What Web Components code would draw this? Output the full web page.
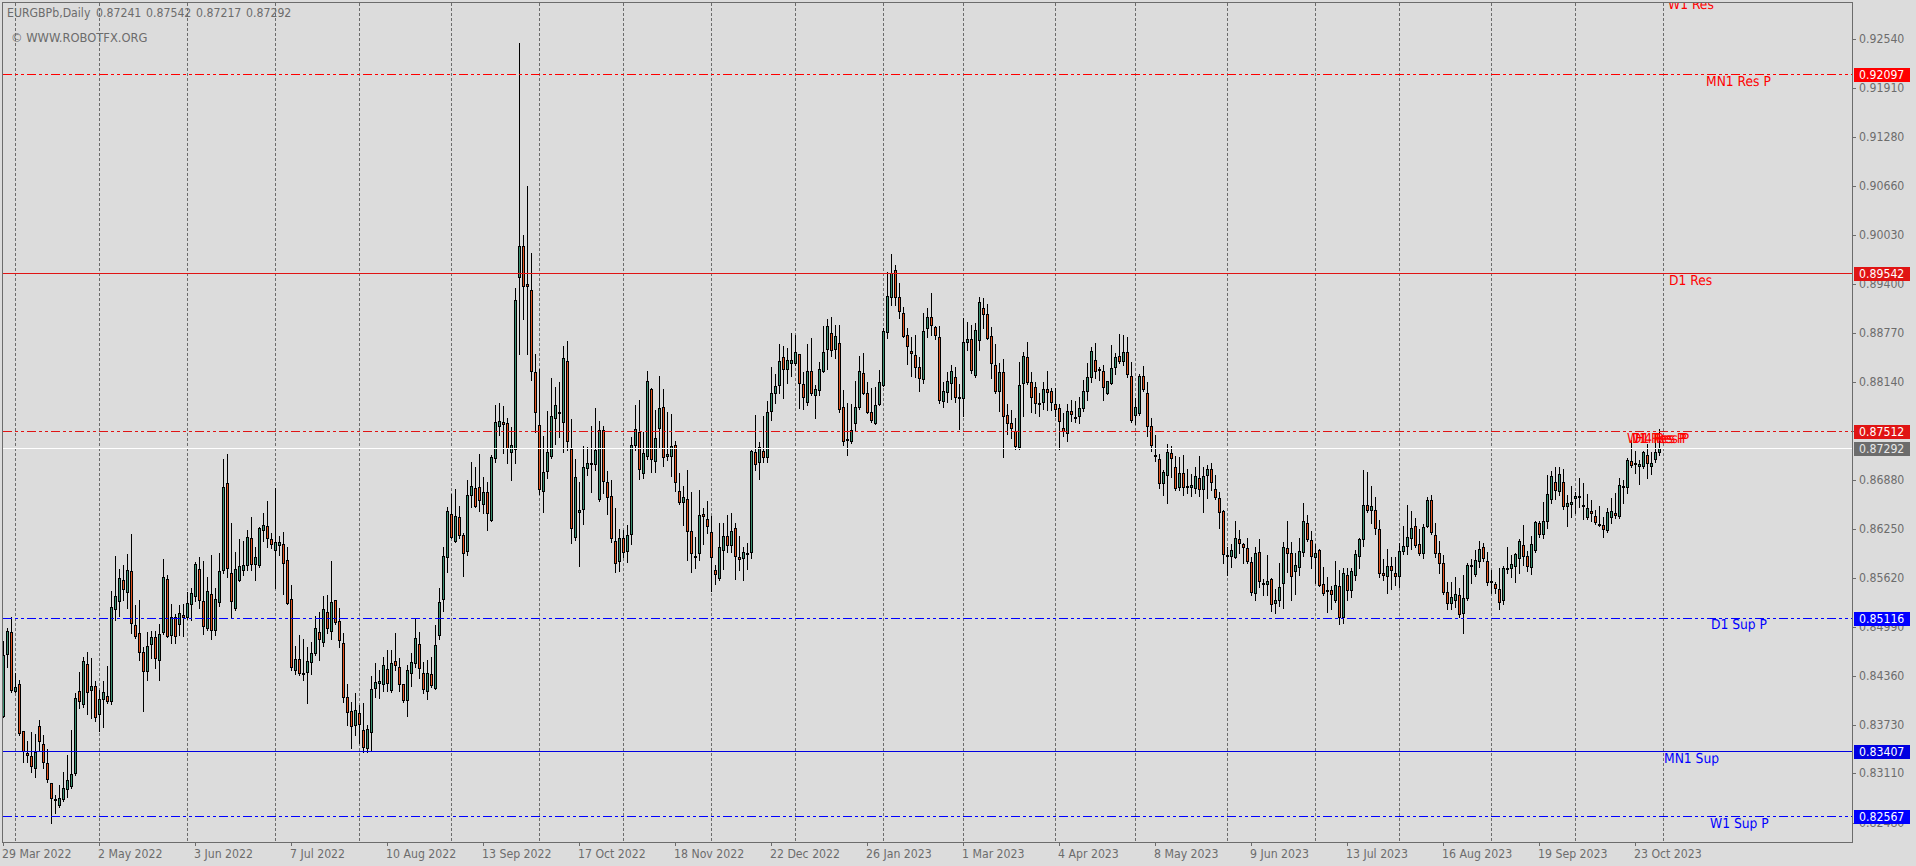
<!DOCTYPE html>
<html lang="en"><head><meta charset="utf-8"><title>EURGBPb,Daily</title>
<style>
html,body{margin:0;padding:0;background:#dcdcdc;overflow:hidden;height:866px}
</style></head><body>
<chart-window>
  <candle-plot slot="plot">
    <chart-legend>
      <span slot="symbol">EURGBPb,Daily</span>
      <span slot="open">0.87241</span><span slot="high">0.87542</span><span slot="low">0.87217</span><span slot="close">0.87292</span>
      <span slot="note">© WWW.ROBOTFX.ORG</span>
    </chart-legend>
  </candle-plot>
  <price-axis slot="axis"></price-axis>
  <time-axis slot="time"></time-axis>
</chart-window>
<script>
const FONT='"DejaVu Sans Condensed","DejaVu Sans",sans-serif';
const TEXT='#6c6c6c';
const SEGS=[
[600,"g122 165 350 350,g85 93 165 200,r52 97 272 275,g220 262 275 275,r240 253 402 405,r394 394 455 487,r423 460 467 487,r396 469 500 515,g402 455 508 530,r360 379 425 450,r405 433 488 503,r447 490 540 545,r548 550 598 668,r585 598 601 638,g555 595 617 622,g515 565 601 603,g465 541 571 590,g390 523 561 563,g280 295 521 525,r215 274 307 325,g170 184 314 320,r157 193 280 342,g175 259 272 355,r243 259 353 363,g270 298 346 392,g243 277 301 380,r198 289 307 310"],
[440,"g453 500 785 792,g348 468 509 540,g388 415 485 528,r375 421 451 480,g342 391 458 505,r282 393 553 578,r495 556 590 593,r480 580 640 660,r620 637 697 812,g575 618 695 720,g573 592 615 655,r573 592 656 685,g552 583 662 720,g357 412 578 582,r405 418 590 592,g492 532 588 610,r522 530 590 608,g495 520 554 585,r492 526 533 588,g455 490 535 538,g445 460 495 540,g365 373 470 483,r352 388 482 503,r363 484 560 582,g410 454 566 570,r346 463 572 597,g445 478 572 585,g340 394 488 498,g57 142 394 398,r42 130 386 410,r250 400 485 535,g336 388 507 510,g297 379 422 424,g303 376 392 405,g270 292 377 390,r232 295 374 390,g322 352 375 420,g262 265 378 382,g220 256 272 302,r183 259 296 322,r280 298 314 325,g145 307 332 444,g288 307 318 345,r275 313 371 462,r322 361 491 493,r436 478 683 690,g618 658 692 702,r585 658 701 706,g598 698 701 720,g620 663 700 788,g607 640 668 702,g528 565 642 645,r515 577 600 660"],
[450,"g438 478 580 587,r435 487 538 550,g333 457 547 567,r450 451 520 522,r475 514 574 590,r550 578 745 755,r702 742 790 825,r755 784 832 893,g730 781 829 855,r765 790 826 880,r760 841 895 905,g825 838 898 905,g678 718 850 900,g640 697 718 740,g660 694 703 743,g622 646 706 722,r600 658 703 722,g600 640 724 725,r548 634 647 660,r625 652 704 722,r702 703 752 755,g645 661 752 797,g610 637 673 708,g505 565 641 650,r547 583 656 685,r637 670 719 728,g630 670 725 747,r622 673 708 712,g525 586 716 716,g415 457 557 567,g290 319 449 483,g172 184 325 365,r133 193 263 265,g118 199 275 275,r168 202 258 263,r248 256 311 378,g90 136 305 315,g37 109 137 170,r50 115 170 172,r13 112 152 182,g80 127 164 190,r95 127 191 240"],
[230,"g675 682 872 872,g525 577 686 695,g519 574 590 614,r527 577 584 668,r565 580 656 698,g590 646 668 750,g175 211 659 698,g-561 49 143 372,r15 49 170 267,r-132 163 170 372,r70 181 427 450,r373 427 548 605,r417 586 781 792,g618 727 785 846,g543 667 727 745,g445 559 680 683,g472 526 566 642,g457 547 548 620,g349 385 578 665,r333 394 635 660,r568 658 898 938,g688 742 923 930,g755 841 848 1007,g648 712 839 882,g652 700 718 735,g588 700 703 785,g534 661 706 720,g574 601 809 812,r587 601 757 790,r723 757 805 852,r750 799 928 937,r835 934 1003 1025,g897 925 997 1022,r900 925 970 980,g885 916 967 995,g620 646 916 941,g525 598 647 660,r510 607 721 747,g605 670 733 745,g423 454 680 688,r475 478 691 725,g540 625 695 725,g438 535 596 655,r477 532 683 708,g545 673 680 690,g552 649 680 738,r633 646 760 783,r730 784 820 822,g768 802 820 885,r720 808 905 990,r785 904 973 1025,g920 977 983 1014,g780 856 973 990,r835 853 860 942,r812 868 890 910,r858 907 985 1083,r1005 1021 1036 1062,g880 952 1048 1050,g880 919 964 1017,r855 919 947 965,g850 904 947 965,r880 895 982 1047,r918 982 989 1020,g950 967 986 1050,g940 970 971 1017,g660 664 970 984,r555 667 706 720,g636 652 700 747,r558 664 685 697,g514 547 685 696,g410 490 545 570,g432 469 491 520,g342 394 469 490"],
[250,"r288 322 360 445,g295 331 360 398,g250 331 341 378,g255 307 341 344,r312 313 401 473,r365 403 443 476,g282 364 458 465,r265 364 431 436,g405 418 437 503,g335 358 422 436,g228 307 365 367,g207 229 299 357,r200 250 304 318,g225 259 300 323,r225 280 480 485,r420 472 575 585,r460 568 572 614,g462 541 575 578,g393 472 521 540,g318 364 475 478,r310 370 431 433,r395 430 488 490,r415 487 512 515,g410 466 521 521,g360 397 464 466,g235 244 407 408,g66 139 248 263,g12 70 145 165,r45 61 143 165,r98 142 187 205,r170 190 260 262,r235 256 290 342,r262 304 311 378,r255 316 353 382,r320 352 386 423,g190 244 389 398,g175 202 238 260,r129 202 229 255,r228 232 259 268,r228 262 452 458,g395 424 455 470,g365 394 428 456,g345 364 401 448,r350 382 445 456,r403 441 442 537,g205 277 448 497,g215 268 278 300,r225 268 362 369,g220 241 379 380,g140 157 272 300,r145 175 194 235,r163 193 266 268,r230 259 341 383,r283 346 425 428,g340 367 425 483,r328 367 500 620,r462 496 521 553,r480 520 536 565,r503 544 590 598,g335 406 593 596,g305 319 403 497,r277 322 398 401,r365 397 443 487,r395 412 461 488,r430 460 466 497,g395 418 460 478,r364 418 428 480,r415 424 460 480,r415 461 481 497,r462 475 517 597,r490 533 546 558,g462 484 551 573,r450 484 496 513,g452 502 503 516,g440 475 502 518,g390 424 476 482,g338 382 425 450,g290 304 383 396,r280 331 365 385,g350 358 364 390,r345 364 415 450,g393 394 431 431"],
[330,"g45 115 163 163,g70 82 115 132,r13 79 95 100,g15 67 97 104,r22 67 134 140,r96 139 274 275,g205 232 259 283,g132 139 253 254,r108 139 181 182,r157 190 290 317,r265 289 349 362,r316 376 380 393,r373 388 463 473,g420 427 463 495,g342 367 439 518,r348 370 388 440,r378 412 476 480,g382 430 473 480,r375 430 473 495,r418 469 472 490,g432 466 473 497,g412 439 478 490,r378 445 481 497,g410 439 481 545,g405 418 439 503,r400 418 458 480,r435 478 503 507,r487 505 550 593,r540 544 676 698,r650 676 680 735,g642 661 680 710,g573 625 685 685,r600 628 643 670,r640 643 655 698,r625 655 697 698,r680 697 790 795,g650 670 793 810,r628 667 757 772,r748 760 766 795,g675 754 766 795,r745 748 826 843,g778 811 821 850,g698 772 814 828,g637 652 763 833,r573 655 673 725,r635 670 742 810,g670 706 727 792,g625 664 715 735,g520 574 670 678,r556 580 631 632,r603 631 680 713,g642 670 685 760,r658 661 767 768,r712 763 793 795,g740 781 787 845,r768 781 796 838,g693 766 812 815,r720 769 865 882,g715 730 865 878,r715 736 784 810,g715 724 784 800,g660 673 739 750,g625 628 682 714,g420 526 631 648,r427 526 544 546,g467 529 544 580,r500 541 596 612,r570 598 731 742,r687 730 737 750,g657 709 742 788,r680 709 724 777,r680 730 742 765,g640 664 742 772"],
[420,"g318 379 395 402,g255 352 380 402,g273 325 356 387,r295 319 377 382,r328 373 403 405,g312 322 403 413,g230 241 320 322,r225 241 338 343,r310 346 402 410,r363 400 431 460,r405 430 518 522,r487 517 553 566,g485 532 553 566,g472 523 544 560,r505 526 584 590,g465 535 581 638,g430 436 538 540,g418 435 437 490,g390 421 466 468,g363 388 427 442,r370 382 418 422,r395 424 490 495,r450 484 487 518,r485 493 508 520,r443 508 550 566,g438 445 544 553,g380 445 447 460,g405 433 448 470,g400 403 440 485,g357 364 418 460,r315 376 412 435,r392 409 442 452,g348 373 445 462,g303 307 392 397,r302 310 346 352,g247 304 346 353,g165 223 305 325,g152 169 241 248,r142 187 214 238,g140 163 215 225,r148 187 260 268,g225 250 260 318,g198 247 254 292,g217 229 236 280,r175 229 233 262,r190 254 257 296,g222 265 295 296,r240 274 281 303,r270 289 308 312,r258 313 316 318,r290 316 331 350,g263 277 332 335,g234 274 293 308,r220 280 288 295,g175 196 292 293,r180 199 203 248,g115 121 205 218,r60 124 138 142,r94 130 132 158,g120 133 140 193,g93 97 142 145,r72 106 133 173,g95 130 142 163,g40 97 119 125,g28 85 98 104"]
];
const LEVELS=[
 {y:74,color:'#ff0000',dash:true,price:'0.92097'},
 {y:273,color:'#e01414',dash:false,price:'0.89542'},
 {y:431,color:'#e01414',dash:true,price:'0.87512'},
 {y:448,color:'#ffffff',dash:false,price:'0.87292',bg:'#6c6c6c',fg:'#e8e8e8'},
 {y:618,color:'#0000ff',dash:true,price:'0.85116'},
 {y:751,color:'#0000e0',dash:false,price:'0.83407'},
 {y:816,color:'#0000ff',dash:true,price:'0.82567'}
];
const GRID=[15,99,187,275,359,451,539,623,711,795,883,963,1055,1135,1227,1315,1399,1491,1575,1663];
const LABELS=[
 ['W1 Res',1668,9,'#ff0000'],['MN1 Res P',1706,86,'#ff0000'],['D1 Res',1669,285,'#ff0000'],
 ['W1 Res P',1627,443,'#ff0000'],['D1 Res P',1632,443,'#ff0000'],['H4 Res P',1635,443,'#ff0000'],
 ['D1 Sup P',1711,629,'#0000ff'],['MN1 Sup',1664,763,'#0000ff'],['W1 Sup P',1710,828,'#0000ff']
];

class ChartWindow extends HTMLElement{
  constructor(){super();this.attachShadow({mode:'open'}).innerHTML=`<style>
    :host{display:grid;grid-template-columns:1851px 1fr;grid-template-rows:841px 1fr;width:1914px;height:864px;padding:2px 0 0 2px;background:#dcdcdc;color:${TEXT};font:12.2px/14px ${FONT}}
    .a{grid-column:2;grid-row:1/3}
    .t{grid-column:1;grid-row:2}
  </style><slot name="plot"></slot><div class="a"><slot name="axis"></slot></div><div class="t"><slot name="time"></slot></div>`;}
}
class CandlePlot extends HTMLElement{
  constructor(){super();
    let i=0,wicks='',green='',red='',black='';
    for(const [o,s] of SEGS){for(const c of s.split(',')){
      const col=c[0],[h,t,b,l]=c.slice(1).split(' ').map(v=>Math.round(o+v/3));
      const x=3+4*i;
      wicks+=`M${x} ${h}h1V${l+1}h-1z`;
      const hh=Math.max(b-t,2);
      black+=`M${x-1} ${t}h3v${hh}h-3z`;
      if(hh>2){const f=`M${x} ${t+1}h1v${hh-2}h-1z`;if(col==='g')green+=f;else red+=f;}
      i++;
    }}
    const grid=GRID.map(x=>`M${x+.5} 3V842`).join('');
    const lines=LEVELS.map(l=>`<path d="M3 ${l.y+.5}H1852" stroke="${l.color}" ${l.dash?'stroke-dasharray="9 3 3 3 3 3"':''}/>`).join('');
    const texts=LABELS.map(([s,x,y,c])=>`<text x="${x}" y="${y}" fill="${c}">${s}</text>`).join('');
    this.attachShadow({mode:'open'}).innerHTML=`<style>
      :host{display:block;position:relative;box-sizing:border-box;width:1851px;height:841px;border:1px solid #6c6c6c;overflow:hidden}
      svg{display:block;width:1849px;height:839px}
      .g{stroke:#6c6c6c;stroke-dasharray:3 2;fill:none}
      text{font:13.7px ${FONT}}
    </style><svg viewBox="3 3 1849 839" shape-rendering="crispEdges">
      <path class="g" d="${grid}"/>
      <path d="${wicks}${black}" fill="#000"/>
      <path d="${green}" fill="#3a9070"/>
      <path d="${red}" fill="#e2521c"/>
      <g fill="none">${lines}</g>
      <g text-rendering="geometricPrecision">${texts}</g>
    </svg><slot></slot>`;
  }
}
class ChartLegend extends HTMLElement{
  constructor(){super();this.attachShadow({mode:'open'}).innerHTML=`<style>
    :host{display:block;position:absolute;left:4px;top:3px;color:${TEXT};font:12.2px/14px ${FONT}}
    .r{display:flex;height:14px;white-space:nowrap}
    .s{width:89px}.v{width:50px;display:block}
    .n{margin:11px 0 0 4px;font-size:12.8px}
  </style><div class="r"><div class="s"><slot name="symbol"></slot></div>
    <div class="v"><slot name="open"></slot></div><div class="v"><slot name="high"></slot></div><div class="v"><slot name="low"></slot></div><div class="v"><slot name="close"></slot></div></div>
  <div class="n"><slot name="note"></slot></div>`;}
}
class PriceAxis extends HTMLElement{
  constructor(){super();
    const p=['0.92540','0.91910','0.91280','0.90660','0.90030','0.89400','0.88770','0.88140','0.87510','0.86880','0.86250','0.85620','0.84990','0.84360','0.83730','0.83110','0.82480'];
    const ys=[39,88,137,186,235,284,333,382,431,480,529,578,627,676,725,773,823];
    const rows=p.map((t,k)=>`<div class="row" style="height:${(ys[k+1]||ys[k]+20)-ys[k]}px"><i></i><span>${t}</span></div>`).join('');
    const tags=LEVELS.map(l=>`<price-tag style="top:${l.y-6}px;background:${l.bg||l.color};color:${l.fg||'#fff'}">${l.price}</price-tag>`).join('');
    this.attachShadow({mode:'open'}).innerHTML=`<style>
      :host{display:block;position:relative;margin-top:-2px;height:866px;overflow:hidden}
      .list{display:flex;flex-direction:column;padding-top:39px}
      .row{position:relative;flex:none;display:flex;align-items:flex-start}
      i{display:block;width:3px;height:1px;background:#6c6c6c;flex:none}
      span{display:block;margin:-7px 0 0 3px;height:14px}
    </style><div class="list">${rows}</div>${tags}`;
  }
}
class PriceTag extends HTMLElement{
  constructor(){super();this.attachShadow({mode:'open'}).innerHTML=`<style>
    :host{display:block;position:absolute;left:1px;width:56px;height:14px;box-sizing:border-box;padding-left:5px;font:12.2px/14px ${FONT}}
  </style><slot></slot>`;}
}
class TimeAxis extends HTMLElement{
  constructor(){super();
    const d=['29 Mar 2022','2 May 2022','3 Jun 2022','7 Jul 2022','10 Aug 2022','13 Sep 2022','17 Oct 2022','18 Nov 2022','22 Dec 2022','26 Jan 2023','1 Mar 2023','4 Apr 2023','8 May 2023','9 Jun 2023','13 Jul 2023','16 Aug 2023','19 Sep 2023','23 Oct 2023'];
    this.attachShadow({mode:'open'}).innerHTML=`<style>
      :host{display:grid;grid-template-columns:repeat(18,96px);padding-left:1px;height:23px}
      .c{position:relative;white-space:nowrap}
      i{display:block;width:1px;height:3px;background:#6c6c6c}
      span{display:block;margin:1px 0 0 -1px;height:14px}
    </style>`+d.map(t=>`<div class="c"><i></i><span>${t}</span></div>`).join('');
  }
}
customElements.define('chart-window',ChartWindow);
customElements.define('candle-plot',CandlePlot);
customElements.define('chart-legend',ChartLegend);
customElements.define('price-tag',PriceTag);
customElements.define('price-axis',PriceAxis);
customElements.define('time-axis',TimeAxis);
</script>
</body></html>
